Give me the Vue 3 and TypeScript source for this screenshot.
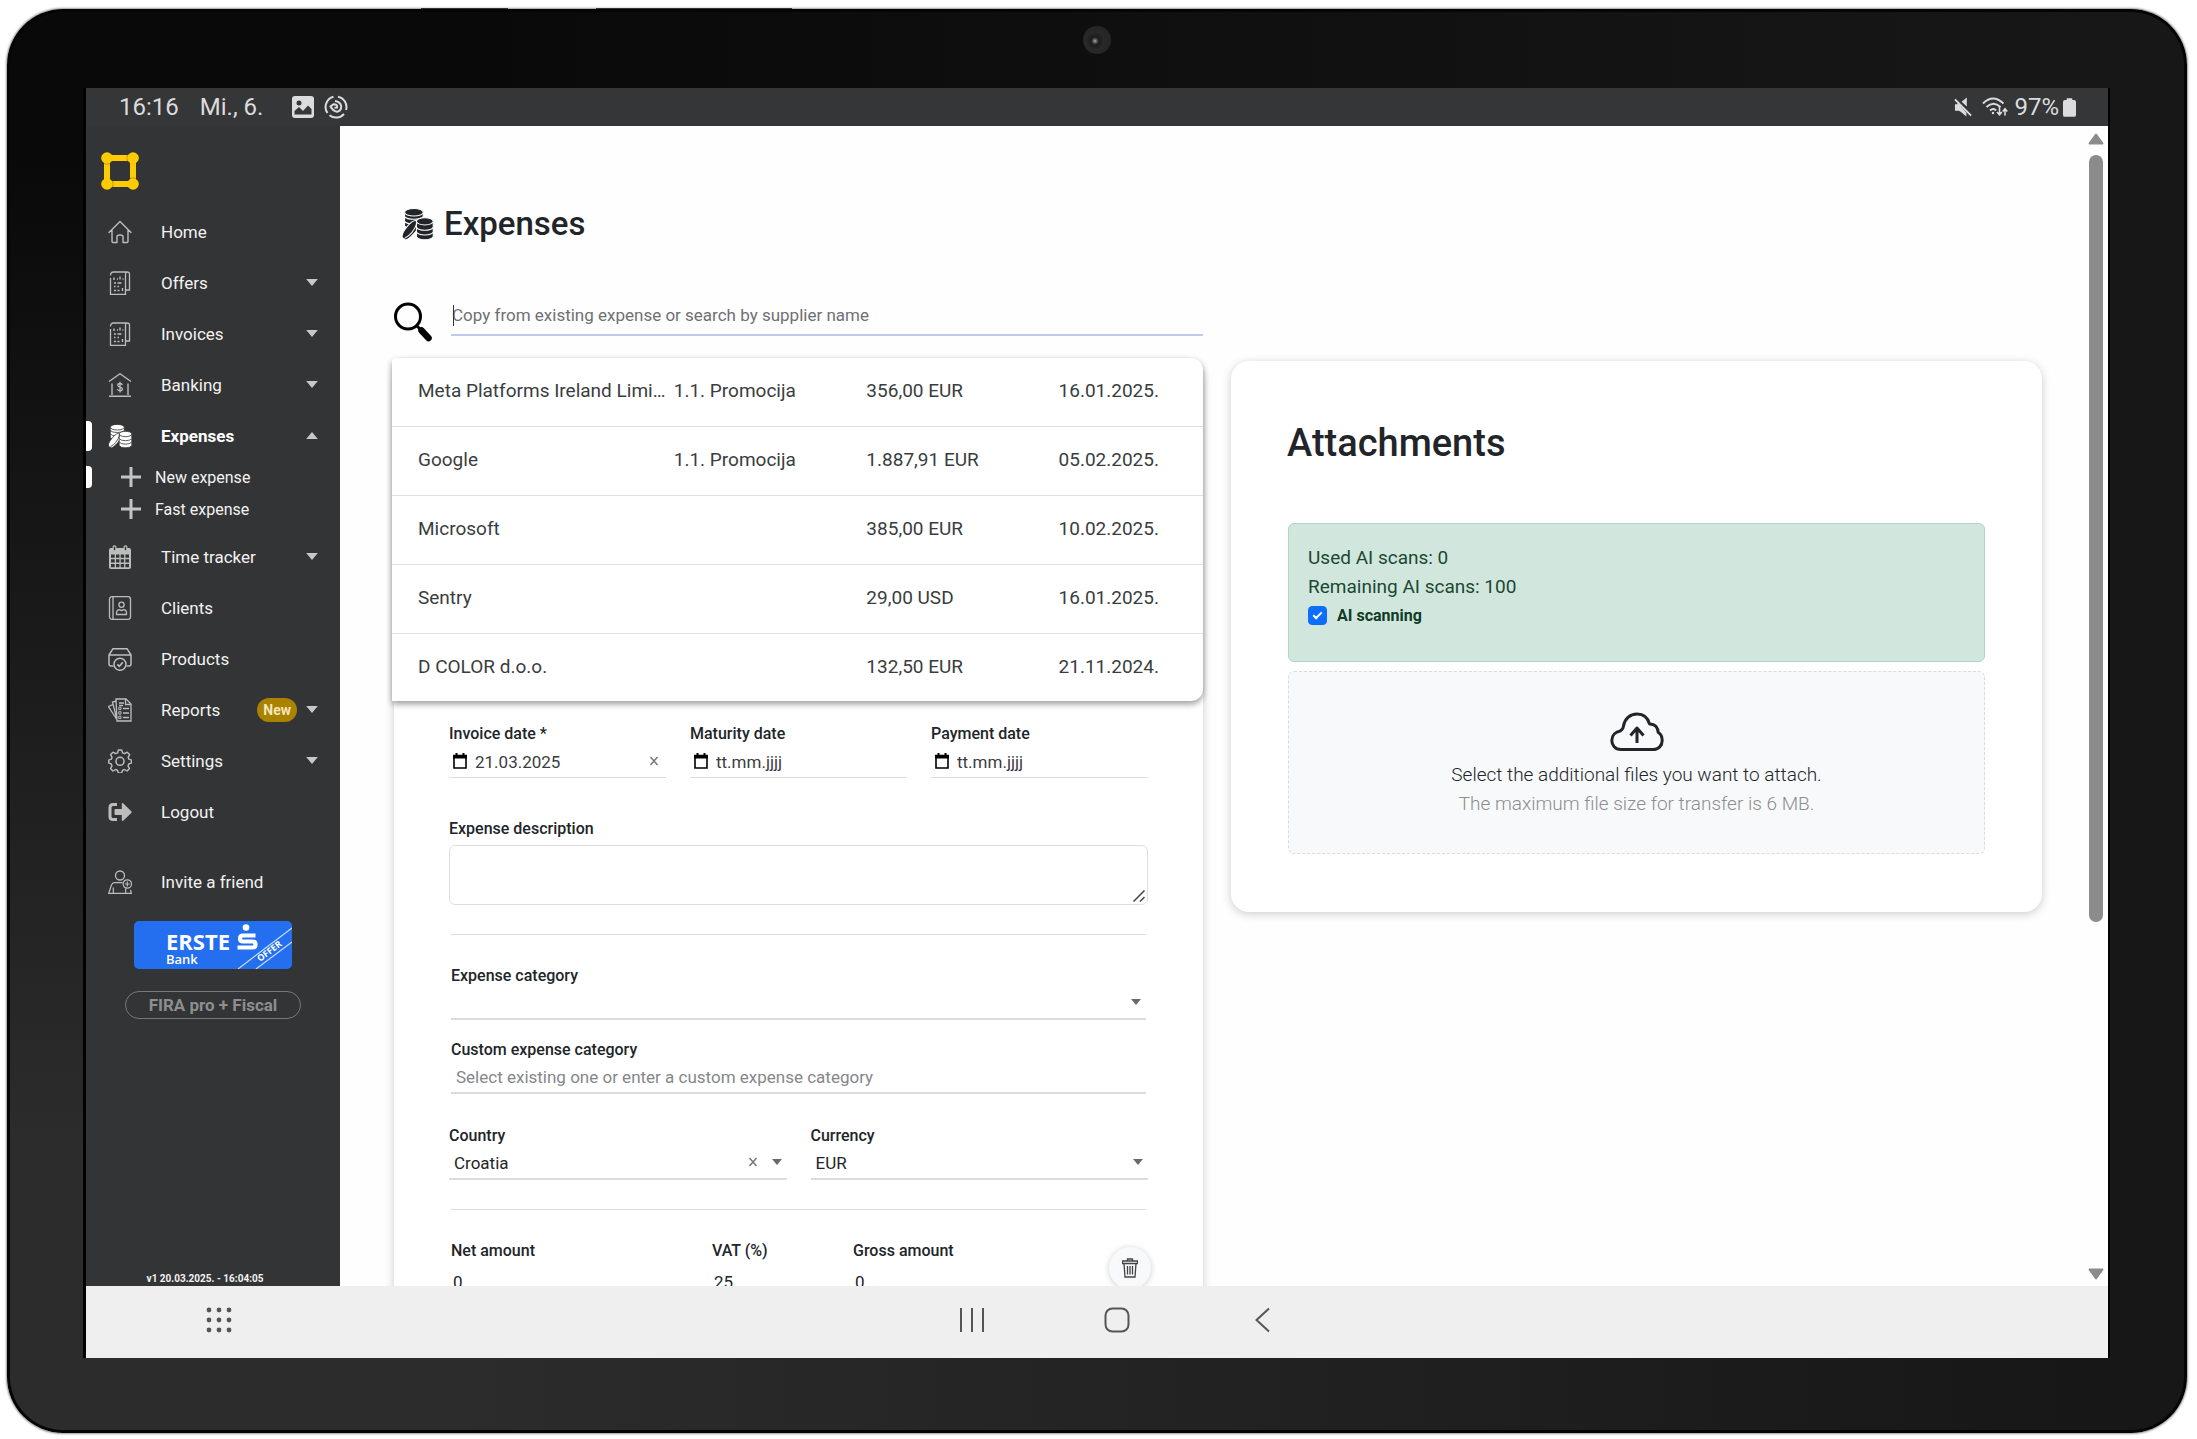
<script setup lang="ts">
import { ref } from 'vue'

interface NavItem {
  label: string
  icon: string
  caret?: 'down' | 'up'
  badge?: string
  active?: boolean
  children?: string[]
}

interface Suggestion {
  supplier: string
  category: string
  amount: string
  date: string
}

const navItems: NavItem[] = [
  { label: 'Home', icon: 'home' },
  { label: 'Offers', icon: 'document', caret: 'down' },
  { label: 'Invoices', icon: 'document', caret: 'down' },
  { label: 'Banking', icon: 'bank', caret: 'down' },
  { label: 'Expenses', icon: 'coins', caret: 'up', active: true, children: ['New expense', 'Fast expense'] },
  { label: 'Time tracker', icon: 'calendar', caret: 'down' },
  { label: 'Clients', icon: 'clients' },
  { label: 'Products', icon: 'products' },
  { label: 'Reports', icon: 'reports', caret: 'down', badge: 'New' },
  { label: 'Settings', icon: 'gear', caret: 'down' },
  { label: 'Logout', icon: 'logout' },
]

const suggestions: Suggestion[] = [
  { supplier: 'Meta Platforms Ireland Limited', category: '1.1. Promocija', amount: '356,00 EUR', date: '16.01.2025.' },
  { supplier: 'Google', category: '1.1. Promocija', amount: '1.887,91 EUR', date: '05.02.2025.' },
  { supplier: 'Microsoft', category: '', amount: '385,00 EUR', date: '10.02.2025.' },
  { supplier: 'Sentry', category: '', amount: '29,00 USD', date: '16.01.2025.' },
  { supplier: 'D COLOR d.o.o.', category: '', amount: '132,50 EUR', date: '21.11.2024.' },
]

const search = ref('')
const invoiceDate = ref('21.03.2025')
const maturityDate = ref('')
const paymentDate = ref('')
const description = ref('')
const category = ref('')
const customCategory = ref('')
const country = ref('Croatia')
const currency = ref('EUR')
const netAmount = ref('0')
const vat = ref('25')
const grossAmount = ref('0')
const aiScanning = ref(true)
</script>

<template>
  <svg class="sprite" aria-hidden="true">
    <symbol id="i-home" viewBox="0 0 24 24">
      <path d="M1 12.500 12 1.500l11 11M4 10v11.500q0 1 1 1h4v-6q0-1.500 3-1.500t3 1.500v6h4q1 0 1-1V10" fill="none" stroke="currentColor" stroke-width="1.400" stroke-linejoin="round" stroke-linecap="round" />
    </symbol>
    <symbol id="i-document" viewBox="0 0 24 24">
      <path d="M2.500 7V23.500h15V4M2.500 4.500q0-3.500 3-3.500H19q2.500 0 2.500 2v16h-4M17.500 4q0-3 1.500-3" fill="none" stroke="currentColor" stroke-width="1.300" />
      <path d="M6 6.500V9M9 8h1M12 5.500v3M14.500 8h1M6 12h2M9.500 12h4M6 15.500h1.500M9.500 15.500H11M6 19.500h2M9.500 19.500h2M14.500 17v3" fill="none" stroke="currentColor" stroke-width="1.400" />
    </symbol>
    <symbol id="i-bank" viewBox="0 0 24 24">
      <path d="M1 8.500 12 .8l11 7.700M4 10.500V22M20 10.500V22M1 23.200h22" fill="none" stroke="currentColor" stroke-width="1.400" />
      <path d="M14.300 12.200q-.4-1.700-2.300-1.700-2.200 0-2.200 1.700c0 2.600 4.600 1.200 4.600 3.800q0 1.800-2.300 1.800-2.300 0-2.600-1.800M12 8.800v10.700" fill="none" stroke="currentColor" stroke-width="1.300" />
    </symbol>
    <symbol id="i-coins" viewBox="0 0 24 24">
      <g fill="currentColor" style="stroke: var(--coin-gap)" stroke-width=".8">
        <path d="M2.300 10.500v3q1.500 2 7 2t7-2v-3z" />
        <path d="M2.300 7v3q1.500 2 7 2t7-2V7z" />
        <path d="M2.300 3.500v3q1.500 2 7 2t7-2v-3z" />
        <ellipse cx="9.300" cy="3.200" rx="7" ry="2.800" />
        <path d="M.8 22.500Q-.8 20 4.200 14t7.600-4.200l1 1.500q1 3-3.300 7.700T3 24z" />
        <path d="M11.200 18v3.500q1.500 2.300 6.300 2.300t6.300-2.300V18z" />
        <path d="M11.200 14.500V18q1.500 2.200 6.300 2.200t6.300-2.200v-3.500z" />
        <path d="M11.200 10.500v4q1.500 2.200 6.300 2.200t6.300-2.200v-4z" />
        <ellipse cx="17.500" cy="10" rx="6.300" ry="2.700" />
      </g>
      <path d="M2.300 22.800q6.500-3.500 9.300-11.500" fill="none" style="stroke: var(--coin-gap)" stroke-width=".8" />
    </symbol>
    <symbol id="i-calendar" viewBox="0 0 24 24">
      <path d="M1 5q0-2 2-2h18q2 0 2 2v17q0 2-2 2H3q-2 0-2-2z" fill="currentColor" />
      <path d="M3 9.500h3.700v3.300H3zM8 9.500h3.400v3.300H8zM12.700 9.500h3.400v3.300h-3.400zM17.400 9.500H21v3.300h-3.600zM3 14.200h3.700v3.300H3zM8 14.200h3.400v3.300H8zM12.700 14.200h3.400v3.300h-3.400zM17.400 14.200H21v3.300h-3.600zM3 18.900h3.700v3.300H3zM8 18.900h3.400v3.300H8zM12.700 18.900h3.400v3.300h-3.400zM17.400 18.900H21v3.300h-3.600z" fill="#333435" />
      <path d="M5.200 1.500q1.300-1.300 2.600 0v4.300H5.200zM16.200 1.500q1.300-1.300 2.600 0v4.300h-2.600z" fill="#333435" stroke="currentColor" stroke-width="1.100" />
    </symbol>
    <symbol id="i-clients" viewBox="0 0 24 24">
      <rect x="1.500" y=".7" width="21" height="22.600" rx="2.500" fill="none" stroke="currentColor" stroke-width="1.300" />
      <path d="M5 1v22" stroke="currentColor" stroke-width="1.300" />
      <circle cx="13.500" cy="8.800" r="2.600" fill="none" stroke="currentColor" stroke-width="1.300" />
      <path d="M8.500 18.500v-2q.5-2.800 3-2.800l2 1 2-1q2.800 0 3 2.800v2z" fill="none" stroke="currentColor" stroke-width="1.300" stroke-linejoin="round" />
    </symbol>
    <symbol id="i-products" viewBox="0 0 24 24">
      <path d="M5.500 19H3q-2 0-2-2V8l4-6.300h14L23 8v9q0 2-2 2h-2.500M1 8h22" fill="none" stroke="currentColor" stroke-width="1.500" stroke-linejoin="round" />
      <circle cx="12" cy="17.300" r="6" fill="none" stroke="currentColor" stroke-width="1.500" />
      <path d="m9.300 17.300 2 2 3.500-4" fill="none" stroke="currentColor" stroke-width="1.700" />
    </symbol>
    <symbol id="i-reports" viewBox="0 0 24 24">
      <path d="M8 1h10l5 5v17H9zM17.500 1v5.500H23M8.500 3 4.500 4 9 22M5 6.500l-4.500 2L8.500 21" fill="none" stroke="currentColor" stroke-width="1.300" />
      <path d="M11 5h5M15 10.500h6M15 15h6M15 19.500h6M11 7.500h4" stroke="currentColor" stroke-width="1.500" />
      <path d="M10.800 9.200h2.200v2.400h-2.200zM10.800 13.700h2.200v2.400h-2.200zM10.800 18.200h2.200v2.400h-2.200z" fill="none" stroke="currentColor" stroke-width="1" />
    </symbol>
    <symbol id="i-gear" viewBox="0 0 24 24">
      <path d="M10.300 1h3.400l.9 2.900 1.900.8 2.700-1.500 2.400 2.400-1.500 2.700.8 1.900 2.600.9v2.800l-2.700 1.100-.8 1.900 1.500 2.700-2.400 2.400-2.700-1.500-1.900.8-.9 2.700h-3.200l-.9-2.700-1.900-.8-2.700 1.500-2.400-2.400L4 16.900 3.200 15 .7 13.900v-2.800l2.600-.9.8-1.900-1.500-2.700L5 3.200l2.700 1.500 1.900-.8z" fill="none" stroke="currentColor" stroke-width="1.400" stroke-linejoin="round" />
      <circle cx="12" cy="12.300" r="4" fill="none" stroke="currentColor" stroke-width="1.500" />
    </symbol>
    <symbol id="i-logout" viewBox="0 0 24 24">
      <path d="M9 4.500H5Q2 4.500 2 7.500v9q0 3 3 3h4" fill="none" stroke="currentColor" stroke-width="3" />
      <path d="M7.500 9h6.300V3.500q.4-1 1.400-.3l8.300 8.200q.6.700 0 1.400l-8.300 8q-1 .6-1.400-.5V15H7.500Q6.500 15 6.500 14v-4q0-1 1-1z" fill="currentColor" />
    </symbol>
    <symbol id="i-invite" viewBox="0 0 24 24">
      <circle cx="12" cy="5.500" r="4.500" fill="none" stroke="currentColor" stroke-width="1.300" />
      <path d="M14.500 12.700H6.500q-2.200 0-3.100 2.500L.7 23.300h4.600v-5.800M5.300 23.300h12.400v-5M17.700 23.300h5.600l-.7-3.500" fill="none" stroke="currentColor" stroke-width="1.200" />
      <circle cx="19.300" cy="14" r="4.200" fill="#333435" stroke="currentColor" stroke-width="1.200" />
      <path d="M19.300 11.600v4.800M16.900 14h4.800" stroke="currentColor" stroke-width="1.200" />
    </symbol>
    <symbol id="i-cross" viewBox="0 0 10 10">
      <path d="m1.500 1 7 8M8.500 1l-7 8" stroke="currentColor" stroke-width="1.500" />
    </symbol>
    <symbol id="i-date" viewBox="0 0 14 16">
      <path d="M1 2.500h12V15H1z" fill="none" stroke="currentColor" stroke-width="1.600" />
      <path d="M0 2h14v3.500H0zM2.500 0h2v3h-2zM9.500 0h2v3h-2z" fill="currentColor" />
    </symbol>
    <symbol id="i-arrow" viewBox="0 0 10 6">
      <path d="M0 0h10L5 6z" fill="currentColor" />
    </symbol>
  </svg>

  <div class="tablet">
    <span class="side-key side-key--power"></span>
    <span class="side-key side-key--volume"></span>
    <span class="camera"></span>

    <div class="screen">
      <header class="status">
        <time class="status__time">16:16</time>
        <span class="status__date">Mi., 6.</span>
        <svg class="status__picture" viewBox="0 0 22 22">
          <rect width="22" height="22" rx="3" fill="currentColor" />
          <circle cx="7" cy="7" r="2.500" fill="#363738" />
          <path d="M2.500 18.500v-3.500l4.500-4 4 4 5-5.500 3.500 3.500v5.500z" fill="#363738" />
        </svg>
        <svg class="status__swirl" viewBox="0 0 24 24" fill="none" stroke="currentColor" stroke-width="2">
          <path d="M9.500 1.800A10.500 10.500 0 0 0 3.500 18M5.500 20.300A10.500 10.500 0 0 0 20 19M14 1.700A10.500 10.500 0 0 1 22 15" />
          <path d="M11 6q5.500.8 6.200 5.300.2 4.500-4.200 5.500-4-.8-6.500-5.300l3-2.300q4.300 0 3.600 3.300l-2.600.3" />
        </svg>
        <span class="status__gap"></span>
        <svg class="status__mute" viewBox="0 0 20 20">
          <path d="M1 7v7h4l2 1 6 5v-4L4 5.500 3.500 7zM8 4.500 13.500 0v9.500z" fill="currentColor" />
          <path d="m1 2 17 17" stroke="currentColor" stroke-width="2" />
        </svg>
        <svg class="status__wifi" viewBox="0 0 26 20" fill="none" stroke="currentColor" stroke-width="2">
          <path d="M1 6.500Q11-3.500 21.500 6.500M4.500 10q7-6.500 14 0M8 13.500q3.500-3 6 0" />
          <circle cx="11" cy="16" r="1.200" fill="currentColor" stroke="none" />
          <path d="M17.500 10v7.500m-2.500-2.500 2.500 2.800 2.300-2.800M23 18.500V12m-2.300 2.500L23 11.800l2.300 2.700" stroke-width="1.600" />
        </svg>
        <span class="status__battery">97%</span>
        <svg class="status__cell" viewBox="0 0 14 20">
          <path d="M4 0h6v2h2q2 0 2 2v14q0 2-2 2H2q-2 0-2-2V4q0-2 2-2h2z" fill="currentColor" />
        </svg>
      </header>

      <div class="app">
        <aside class="sidebar">
          <svg class="logo" viewBox="0 0 38 38">
            <path d="M6 6h26v26H6z" fill="none" stroke="#ffcb05" stroke-width="6" />
            <g fill="#ffcb05">
              <circle cx="6" cy="6" r="5.800" /><circle cx="32" cy="6" r="5.800" />
              <circle cx="6" cy="32" r="5.800" /><circle cx="32" cy="32" r="5.800" />
            </g>
            <path d="M26.500 3q-1.500 3 0 6M3 11.500q3 1.500 6 0M11.500 29q1.500 3 0 6M29 26.500q3-1.500 6 0" fill="none" stroke="#a8850c" stroke-width=".7" />
          </svg>

          <nav>
            <ul class="menu">
              <li v-for="item in navItems" :key="item.label">
                <a href="#" class="menu__item" :class="{ 'menu__item--active': item.active }">
                  <svg class="menu__icon"><use :href="'#i-' + item.icon" /></svg>
                  <span class="menu__label">{{ item.label }}</span>
                  <span v-if="item.badge" class="menu__badge">{{ item.badge }}</span>
                  <svg v-if="item.caret" class="menu__caret" :class="{ 'menu__caret--up': item.caret === 'up' }"><use href="#i-arrow" /></svg>
                </a>
                <ul v-if="item.children" class="submenu">
                  <li v-for="(child, i) in item.children" :key="child">
                    <a href="#" class="submenu__item" :class="{ 'submenu__item--active': i === 0 }">
                      <svg class="submenu__plus" viewBox="0 0 20 20"><path d="M10 0v20M0 10h20" stroke="currentColor" stroke-width="3" /></svg>
                      {{ child }}
                    </a>
                  </li>
                </ul>
              </li>
              <li class="menu__invite">
                <a href="#" class="menu__item">
                  <svg class="menu__icon"><use href="#i-invite" /></svg>
                  <span class="menu__label">Invite a friend</span>
                </a>
              </li>
            </ul>
          </nav>

          <a href="#" class="erste">
            <svg viewBox="0 0 158 48">
              <text x="32" y="29" class="erste__name">ERSTE</text>
              <text x="32" y="43" class="erste__bank">Bank</text>
              <circle cx="112" cy="6.500" r="3.300" fill="#fff" />
              <path d="M121.500 14.500h-12.500q-3 0-3 3t3 3h9.500q3 0 3 3t-3 3H103.500" fill="none" stroke="#fff" stroke-width="4.200" />
              <path d="M104 48 158 7M122 48l36-27" stroke="#c9dcff" stroke-width="1.200" />
              <text class="erste__offer" transform="translate(126 41) rotate(-37)">OFFER</text>
            </svg>
          </a>
          <button type="button" class="plan">FIRA pro + Fiscal</button>
          <small class="version">v1 20.03.2025. - 16:04:05</small>
        </aside>

        <main class="main">
          <div class="content">
            <h1 class="title">
              <svg class="title__icon"><use href="#i-coins" /></svg>
              Expenses
            </h1>

            <div class="columns search-row">
              <div class="search">
                <svg class="search__icon" viewBox="0 0 40 40">
                  <circle cx="15" cy="14.500" r="12.500" fill="none" stroke="#000" stroke-width="3" />
                  <path d="m24 24 3.500 3.500" stroke="#000" stroke-width="3" />
                  <path d="m28.500 28.500 7 7.500" stroke="#000" stroke-width="6.500" stroke-linecap="round" />
                </svg>
                <input v-model="search" class="search__input" type="text" aria-label="Search expenses" placeholder="Copy from existing expense or search by supplier name" />
                <span class="search__cursor"></span>
              </div>
            </div>

            <div class="columns panels">
              <div class="left">
                <table class="suggestions">
                  <tbody>
                    <tr v-for="row in suggestions" :key="row.supplier">
                      <td class="c-supplier">{{ row.supplier }}</td>
                      <td class="c-category">{{ row.category }}</td>
                      <td class="c-amount">{{ row.amount }}</td>
                      <td class="c-date">{{ row.date }}</td>
                    </tr>
                  </tbody>
                </table>

                <form class="card form" @submit.prevent>
                  <div class="dates">
                    <div class="field">
                      <label for="invoice-date">Invoice date *</label>
                      <div class="control control--light">
                        <svg class="control__date"><use href="#i-date" /></svg>
                        <input id="invoice-date" v-model="invoiceDate" type="text" />
                        <button type="button" class="clear" aria-label="Clear invoice date"><svg><use href="#i-cross" /></svg></button>
                      </div>
                    </div>
                    <div class="field">
                      <label for="maturity-date">Maturity date</label>
                      <div class="control control--light">
                        <svg class="control__date"><use href="#i-date" /></svg>
                        <input id="maturity-date" v-model="maturityDate" class="solid" type="text" placeholder="tt.mm.jjjj" />
                      </div>
                    </div>
                    <div class="field">
                      <label for="payment-date">Payment date</label>
                      <div class="control control--light">
                        <svg class="control__date"><use href="#i-date" /></svg>
                        <input id="payment-date" v-model="paymentDate" class="solid" type="text" placeholder="tt.mm.jjjj" />
                      </div>
                    </div>
                  </div>

                  <div class="field description">
                    <label for="description">Expense description</label>
                    <div class="description__box">
                      <textarea id="description" v-model="description"></textarea>
                      <svg class="description__grip" viewBox="0 0 12 12"><path d="M.5 11.500 11.500.5M7 11.500 11.500 7" stroke="#444" stroke-width="1.500" /></svg>
                    </div>
                  </div>

                  <div class="inset">
                    <hr />
                    <div class="field">
                      <label for="category">Expense category</label>
                      <div class="control">
                        <select id="category" v-model="category"><option value=""></option></select>
                        <svg class="control__arrow"><use href="#i-arrow" /></svg>
                      </div>
                    </div>
                    <div class="field custom">
                      <label for="custom-category">Custom expense category</label>
                      <div class="control">
                        <input id="custom-category" v-model="customCategory" type="text" placeholder="Select existing one or enter a custom expense category" />
                      </div>
                    </div>
                  </div>

                  <div class="pair">
                    <div class="field">
                      <label for="country">Country</label>
                      <div class="control">
                        <select id="country" v-model="country"><option>Croatia</option></select>
                        <button type="button" class="clear" aria-label="Clear country"><svg><use href="#i-cross" /></svg></button>
                        <svg class="control__arrow"><use href="#i-arrow" /></svg>
                      </div>
                    </div>
                    <div class="field">
                      <label for="currency">Currency</label>
                      <div class="control">
                        <select id="currency" v-model="currency"><option>EUR</option></select>
                        <svg class="control__arrow"><use href="#i-arrow" /></svg>
                      </div>
                    </div>
                  </div>

                  <div class="inset">
                    <hr />
                    <div class="amounts">
                      <div class="field">
                        <label for="net">Net amount</label>
                        <input id="net" v-model="netAmount" type="text" />
                      </div>
                      <div class="field">
                        <label for="vat">VAT (%)</label>
                        <input id="vat" v-model="vat" type="text" />
                      </div>
                      <div class="field">
                        <label for="gross">Gross amount</label>
                        <input id="gross" v-model="grossAmount" type="text" />
                      </div>
                      <button type="button" class="trash" aria-label="Remove row">
                        <svg viewBox="0 0 16 20" fill="none" stroke="#444" stroke-width="1.300">
                          <path d="M.5 3h15v2.500H.5zM5.500 3V1h5v2M2 5.500 3 19h10l1-13.500M5.500 8v8.500M8 8v8.500M10.500 8v8.500" />
                        </svg>
                      </button>
                    </div>
                  </div>
                </form>
              </div>

              <section class="card attachments">
                <h2>Attachments</h2>
                <div class="ai">
                  <p>Used AI scans: 0</p>
                  <p>Remaining AI scans: 100</p>
                  <label class="ai__check"><input v-model="aiScanning" type="checkbox" /> AI scanning</label>
                </div>
                <label class="drop">
                  <input type="file" multiple />
                  <svg class="drop__icon" viewBox="0 0 54 40" fill="none" stroke="#212529" stroke-width="3" stroke-linejoin="round">
                    <path d="M11 37.500C5 37.500 1.800 33 1.800 28.500c0-5.500 4-8.800 8.500-9.500C12 17 13 18 13.500 14 14.500 7 20 2 27 2c6.500 0 11 4 12.500 10 6 0 8.500 4 8.700 8.500 2.700 1.500 4 4.500 4 8 0 5-3.500 9-9.200 9z" />
                    <path d="M27 31V17m-6.500 6.500L27 16l6.500 7.500" />
                  </svg>
                  <span class="drop__text">Select the additional files you want to attach.</span>
                  <span class="drop__hint">The maximum file size for transfer is 6 MB.</span>
                </label>
              </section>
            </div>
          </div>

          <div class="scroll" aria-hidden="true">
            <svg viewBox="0 0 16 12"><path d="M8 1.500 14.500 10.500h-13z" fill="#8b8b8b" stroke="#8b8b8b" stroke-width="2" stroke-linejoin="round" /></svg>
            <div class="scroll__track"><div class="scroll__thumb"></div></div>
            <svg viewBox="0 0 16 12"><path d="M8 10.500 14.500 1.500h-13z" fill="#8b8b8b" stroke="#8b8b8b" stroke-width="2" stroke-linejoin="round" /></svg>
          </div>
        </main>
      </div>

      <footer class="dock">
        <button type="button" class="dock__apps" aria-label="Apps">
          <svg viewBox="0 0 26 26" fill="#555">
            <circle v-for="n in 9" :key="n" :cx="3 + ((n - 1) % 3) * 10" :cy="3 + Math.floor((n - 1) / 3) * 10" r="2.400" />
          </svg>
        </button>
        <div class="dock__keys">
          <button type="button" aria-label="Recent apps"><svg viewBox="0 0 26 26"><path d="M2 1v24M13 1v24M24 1v24" /></svg></button>
          <button type="button" aria-label="Home screen"><svg viewBox="0 0 26 26"><rect x="1.500" y="1.500" width="23" height="23" rx="7" /></svg></button>
          <button type="button" aria-label="Back"><svg viewBox="0 0 26 26"><path d="M20 1.500 7.500 13 20 24.500" /></svg></button>
        </div>
      </footer>
    </div>
  </div>
</template>

<style>
html,
body {
  background: #fff;
}

#app {
  height: 100vh;
  box-sizing: border-box;
  padding: 9px 10px 6px 7px;
  font-family: Roboto, 'Liberation Sans', sans-serif;
}
</style>

<style scoped>
*,
*::before,
*::after {
  box-sizing: border-box;
}

button,
input,
select,
textarea {
  font: inherit;
  color: inherit;
  background: none;
  border: 0;
  padding: 0;
  margin: 0;
  outline: 0;
}

a {
  color: inherit;
  text-decoration: none;
}

ul {
  list-style: none;
  margin: 0;
  padding: 0;
}

svg {
  display: block;
  flex: none;
}

.sprite {
  position: absolute;
  width: 0;
  height: 0;
}

/* Device */
.tablet {
  position: relative;
  display: flex;
  height: 100%;
  padding: 79px 79px 75px;
  border-radius: 56px;
  background:
    linear-gradient(to right, transparent 20%, #171717 95%),
    linear-gradient(#090909 10%, #2c2c2c 80%);
  box-shadow: inset 0 0 0 3px #050505, 0 0 2px 1px #999;
}

.side-key {
  position: absolute;
  top: -1px;
  height: 1px;
  background: #333;
}

.side-key--power {
  left: 19%;
  width: 4%;
}

.side-key--volume {
  left: 27%;
  width: 9%;
}

.camera {
  position: absolute;
  top: 17px;
  left: 50%;
  width: 28px;
  height: 28px;
  margin-left: -14px;
  border-radius: 50%;
  background: radial-gradient(circle at 12px 15px, #aaa 0, #555 2px, #1b1b1b 4px, #292929 9px, #262626 13px);
}

.screen {
  flex: 1;
  min-width: 0;
  display: flex;
  flex-direction: column;
  background: #fefefe;
  box-shadow: -3px 0 0 #000, 2px 0 0 #000;
}

.status {
  flex: none;
  display: flex;
  align-items: center;
  height: 38px;
  padding: 0 32px 0 33px;
  background: #353637;
  color: #dcdcde;
  font-size: 24px;
  line-height: 38px;
}

.status__date {
  margin-left: 21px;
}

.status__picture {
  width: 22px;
  height: 22px;
  margin-left: 29px;
}

.status__swirl {
  width: 24px;
  height: 24px;
  margin-left: 10px;
}

.status__gap {
  flex: 1;
}

.status__mute {
  width: 19px;
  height: 20px;
  margin-right: 9px;
}

.status__wifi {
  width: 26px;
  height: 20px;
  margin-right: 6px;
}

.status__cell {
  width: 13px;
  height: 19px;
  margin-left: 4px;
}

.app {
  flex: 1;
  min-height: 0;
  display: flex;
  overflow: hidden;
}

/* Sidebar */
.sidebar {
  --coin-gap: #333435;
  flex: none;
  width: 254px;
  display: flex;
  flex-direction: column;
  align-items: center;
  padding-top: 26px;
  background: #333435;
  color: #f2f2f2;
  font-size: 17px;
}

.sidebar nav {
  align-self: stretch;
}

.logo {
  width: 38px;
  height: 38px;
  margin: 0 0 16px 15px;
  align-self: flex-start;
}

.menu__item {
  position: relative;
  display: flex;
  align-items: center;
  height: 51px;
  padding: 0 22px;
}

.menu__icon {
  width: 24px;
  height: 24px;
  margin-right: 29px;
  color: #bdbdbd;
}

.menu__label {
  flex: 1;
}

.menu__caret {
  width: 12px;
  height: 7px;
  color: #c8c8c8;
}

.menu__caret--up {
  transform: rotate(180deg);
}

.menu__badge {
  height: 24px;
  margin-right: 9px;
  padding: 0 6px;
  border-radius: 12px;
  background: #a98200;
  color: #f3e7bb;
  font-size: 14px;
  font-weight: 700;
  line-height: 24px;
}

.menu__item--active {
  color: #fff;
  font-weight: 700;
}

.menu__item--active .menu__icon {
  color: #fff;
}

.menu__item--active::before,
.submenu__item--active::before {
  content: '';
  position: absolute;
  left: 0;
  width: 6px;
  height: 30px;
  border-radius: 0 4px 4px 0;
  background: #fff;
}

.submenu {
  margin-bottom: 6px;
}

.submenu__item {
  position: relative;
  display: flex;
  align-items: center;
  height: 32px;
  padding-left: 35px;
  font-size: 16px;
}

.submenu__item--active::before {
  height: 22px;
}

.submenu__plus {
  width: 20px;
  height: 20px;
  margin-right: 14px;
  color: #c4c4c4;
}

.menu__invite {
  margin-top: 19px;
}

.erste {
  width: 158px;
  height: 48px;
  margin-top: 14px;
  border-radius: 5px;
  overflow: hidden;
  background: #236fef;
}

.erste svg {
  width: 158px;
  height: 48px;
}

.erste text {
  fill: #fff;
  font-family: 'Open Sans', 'Noto Sans', sans-serif;
  font-weight: 700;
}

.erste .erste__name {
  font-size: 22px;
}

.erste .erste__bank {
  font-size: 13px;
  font-weight: 600;
}

.erste .erste__offer {
  font-size: 9px;
}

.plan {
  flex: none;
  width: 176px;
  height: 28px;
  margin-top: 22px;
  border: 1px solid #77787a;
  border-radius: 14px;
  color: #8d8e8f;
  font-size: 17px;
  font-weight: 700;
  line-height: 26px;
}

.version {
  margin-top: auto;
  padding-right: 16px;
  font-size: 10px;
  font-weight: 700;
  line-height: 14px;
}

/* Page */
.main {
  flex: 1;
  min-width: 0;
  display: flex;
  color: #212529;
}

.content {
  --coin-gap: #fefefe;
  flex: 1;
  min-width: 0;
  padding: 76px 43px 0 52px;
}

.columns {
  display: grid;
  grid-template-columns: 1fr 1fr;
  gap: 28px;
}

.title {
  display: flex;
  align-items: center;
  margin: 0 0 50px 9px;
  font-size: 33px;
  font-weight: 500;
  line-height: 44px;
}

.title__icon {
  width: 33px;
  height: 32px;
  margin-right: 10px;
}

.search-row {
  height: 62px;
}

.search {
  position: relative;
  display: flex;
  align-items: flex-start;
}

.search__icon {
  width: 40px;
  height: 40px;
  margin: 6px 18px 0 1px;
}

.search__input {
  flex: 1;
  height: 40px;
  padding-left: 1px;
  border-bottom: 2px solid #bccbee;
  font-size: 17px;
}

.search__input::placeholder {
  color: #6e7074;
  opacity: 1;
}

.search__cursor {
  position: absolute;
  left: 61px;
  top: 9px;
  width: 1px;
  height: 21px;
  background: #333;
}

.panels {
  align-items: start;
  padding-top: 3px;
}

.left {
  position: relative;
  padding-left: 2px;
}

.card {
  background: #fff;
  border-radius: 18px;
  box-shadow: 0 2px 10px rgba(0, 0, 0, 0.2);
}

.suggestions {
  position: absolute;
  top: -3px;
  left: 0;
  width: 100%;
  table-layout: fixed;
  border-spacing: 0;
  border-radius: 4px 12px 12px 0;
  background: #fff;
  box-shadow: 0 3px 6px rgba(0, 0, 0, 0.4);
  font-size: 19px;
  color: #3a3d40;
}

.suggestions td {
  height: 69px;
  padding: 0 0 3px;
  border-bottom: 1px solid #dfdfdf;
  overflow: hidden;
  white-space: nowrap;
  text-overflow: ellipsis;
}

.suggestions tr:last-child td {
  height: 67px;
  border-bottom: 0;
}

.suggestions .c-supplier {
  width: 34%;
  padding-left: 26px;
  padding-right: 2px;
}

.suggestions .c-category {
  width: 24%;
  padding-left: 6px;
}

.suggestions .c-amount {
  width: 23%;
  padding-left: 4px;
}

.suggestions .c-date {
  padding-right: 44px;
  text-align: right;
}

/* Form */
.form {
  padding: 361px 55px 40px;
  font-size: 17px;
}

.field {
  min-width: 0;
}

.field label {
  display: block;
  font-size: 16px;
  font-weight: 500;
  line-height: 24px;
}

.control {
  display: flex;
  align-items: center;
  height: 32px;
  border-bottom: 2px solid #dcdcdc;
}

.control--light {
  border-bottom: 1px solid #dcdcdc;
}

.control input,
.control select {
  flex: 1;
  min-width: 0;
  height: 30px;
  padding-left: 5px;
  appearance: none;
}

.control--light input {
  padding-left: 0;
  color: #3a3d40;
}

.control__date {
  width: 14px;
  height: 16px;
  margin: 0 8px 2px 4px;
  color: #000;
}

.control__arrow {
  width: 10px;
  height: 6px;
  margin: 0 5px 3px;
  color: #6a6a6a;
}

.clear {
  padding: 0 7px 2px;
  color: #777;
}

.pair .clear {
  padding-right: 9px;
}

.clear svg {
  width: 10px;
  height: 10px;
}

::placeholder {
  color: #85878a;
  opacity: 1;
}

.solid::placeholder {
  color: #3a3d40;
}

.dates {
  display: grid;
  grid-template-columns: repeat(3, 1fr);
  gap: 24px;
}

.description {
  margin-top: 39px;
}

.description__box {
  position: relative;
  margin-top: 4px;
}

.description textarea {
  display: block;
  width: 100%;
  height: 60px;
  border: 1px solid #dedede;
  border-radius: 6px;
  resize: none;
}

.description__grip {
  position: absolute;
  right: 3px;
  bottom: 3px;
  width: 12px;
  height: 12px;
}

.inset {
  padding: 0 2px;
}

hr {
  height: 1px;
  margin: 29px 0;
  border: 0;
  background: #dedede;
}

.custom {
  margin-top: 18px;
}

.pair {
  display: grid;
  grid-template-columns: 1fr 1fr;
  gap: 24px;
  margin-top: 30px;
}

.amounts {
  display: grid;
  grid-template-columns: 261px 141px 1fr 42px;
}

.amounts input {
  width: 100%;
  height: 38px;
  padding-left: 2px;
}

.trash {
  display: flex;
  align-items: center;
  justify-content: center;
  width: 42px;
  height: 42px;
  margin: 8px 0 0 5px;
  border-radius: 50%;
  background: #f8f9fa;
  box-shadow: 0 1px 6px rgba(0, 0, 0, 0.2);
}

.trash svg {
  width: 16px;
  height: 20px;
}

/* Attachments */
.attachments {
  padding: 57px 57px 58px;
}

.attachments h2 {
  margin: 0 0 55px -1px;
  font-size: 38px;
  font-weight: 500;
  line-height: 50px;
}

.ai {
  height: 139px;
  margin-bottom: 9px;
  padding: 19px;
  border: 1px solid #b3d5c6;
  border-radius: 6px;
  background: #d1e7dd;
  color: #1b4733;
  font-size: 19px;
  line-height: 29px;
}

.ai p {
  margin: 0;
}

.ai__check {
  display: flex;
  align-items: center;
  font-size: 16px;
  font-weight: 700;
  color: #0f3b27;
}

.ai__check input {
  appearance: none;
  display: grid;
  place-items: center;
  width: 19px;
  height: 19px;
  margin-right: 10px;
  border-radius: 4px;
  border: 1px solid #0d6efd;
}

.ai__check input:checked {
  background: #0d6efd;
}

.ai__check input:checked::before {
  content: '';
  width: 9px;
  height: 5px;
  margin-bottom: 3px;
  border: solid #fff;
  border-width: 0 0 2px 2px;
  transform: rotate(-45deg);
}

.drop {
  position: relative;
  display: flex;
  flex-direction: column;
  align-items: center;
  height: 183px;
  padding-top: 40px;
  border: 1px dashed #d9dcdf;
  border-radius: 6px;
  background: #f8f9fa;
  font-size: 19px;
  font-weight: 300;
  line-height: 29px;
}

.drop input {
  position: absolute;
  inset: 0;
  opacity: 0;
}

.drop__icon {
  width: 54px;
  height: 40px;
  margin-bottom: 8px;
}

.drop__hint {
  color: #8b8e91;
}

/* Scrollbar */
.scroll {
  flex: none;
  display: flex;
  flex-direction: column;
  align-items: center;
  width: 23px;
  padding: 7px 2px 6px 0;
}

.scroll svg {
  width: 16px;
  height: 12px;
}

.scroll__track {
  flex: 1;
  width: 14px;
  padding: 10px 0;
}

.scroll__thumb {
  height: 69.5%;
  border-radius: 7px;
  background: #8b8b8b;
}

/* System navigation */
.dock {
  flex: none;
  display: grid;
  grid-template-columns: 1fr auto 1fr;
  align-items: center;
  height: 72px;
  padding: 0 0 5px 40px;
  background: #efefef;
}

.dock__apps {
  justify-self: start;
  margin-left: 80px;
}

.dock__keys {
  display: flex;
  gap: 119px;
}

.dock svg {
  width: 26px;
  height: 26px;
}

.dock__keys svg {
  fill: none;
  stroke: #555;
  stroke-width: 2;
}
</style>
